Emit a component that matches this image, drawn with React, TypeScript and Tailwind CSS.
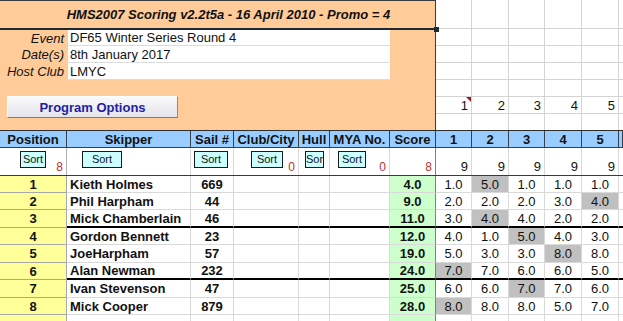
import React from 'react';

const COLS =
  'grid grid-cols-[67px_124px_43px_65px_31px_60px_46px_36px_37px_36px_37px_37px_1fr]';

type Row = { pos: number; name: string; sail: string; score: string; races: string[]; drop: number };

const ROWS: Row[] = [
  { pos: 1, name: 'Kieth Holmes', sail: '669', score: '4.0', races: ['1.0', '5.0', '1.0', '1.0', '1.0'], drop: 1 },
  { pos: 2, name: 'Phil Harpham', sail: '44', score: '9.0', races: ['2.0', '2.0', '2.0', '3.0', '4.0'], drop: 4 },
  { pos: 3, name: 'Mick Chamberlain', sail: '46', score: '11.0', races: ['3.0', '4.0', '4.0', '2.0', '2.0'], drop: 1 },
  { pos: 4, name: 'Gordon Bennett', sail: '23', score: '12.0', races: ['4.0', '1.0', '5.0', '4.0', '3.0'], drop: 2 },
  { pos: 5, name: 'JoeHarpham', sail: '57', score: '19.0', races: ['5.0', '3.0', '3.0', '8.0', '8.0'], drop: 3 },
  { pos: 6, name: 'Alan Newman', sail: '232', score: '24.0', races: ['7.0', '7.0', '6.0', '6.0', '5.0'], drop: 0 },
  { pos: 7, name: 'Ivan Stevenson', sail: '47', score: '25.0', races: ['6.0', '6.0', '7.0', '7.0', '6.0'], drop: 2 },
  { pos: 8, name: 'Mick Cooper', sail: '879', score: '28.0', races: ['8.0', '8.0', '8.0', '5.0', '7.0'], drop: 0 },
];

const HEIGHTS = ['h-[17px]', 'h-[17px]', 'h-[18px]', 'h-[17px]', 'h-[18px]', 'h-[17px]', 'h-[18px]', 'h-[17px]'];
const HEADERS = ['Position', 'Skipper', 'Sail #', 'Club/City', 'Hull', 'MYA No.', 'Score', '1', '2', '3', '4', '5', ''];
const RACE_W = ['w-[36px]', 'w-[37px]', 'w-[36px]', 'w-[37px]', 'w-[37px]'];

const SortBtn = ({ w, label = 'Sort' }: { w: string; label?: string }) => (
  <div className={`${w} h-[17px] bg-[#ccffff] border border-[#1a1a1a] flex items-center justify-center text-[11px] overflow-hidden`}>
    {label}
  </div>
);

const Count = ({ n }: { n: string }) => (
  <div className="ml-auto self-end pr-[3px] pb-[2px] text-[12px] text-[#b83232] leading-none">{n}</div>
);

export default function App() {
  const bottom = (i: number) => (i === 2 || i === 5 ? 'border-b-2 border-b-black' : 'border-b border-b-[#d9d9d9]');

  return (
    <div className="w-[623px] h-[321px] overflow-hidden bg-white text-[13px] text-[#111] leading-none font-['Liberation_Sans',Arial,sans-serif]">
      {/* top area */}
      <div className="flex h-[130px]">
        <div className="w-[436px] shrink-0 bg-[#ffcc99] border-r border-r-[#3a3a3a] flex flex-col">
          <div className="relative h-[30px] border-t border-t-[#3a3a3a] border-b-2 border-b-[#1f2933] flex items-center justify-center pl-[22px] font-bold italic">
            HMS2007 Scoring v2.2t5a - 16 April 2010 - Promo = 4
            <span className="absolute right-[-4px] bottom-[-4px] w-[5px] h-[5px] bg-[#1f2933]" />
          </div>
          {[
            ['Event', 'DF65 Winter Series Round 4', 'h-[16px]'],
            ['Date(s)', '8th January 2017', 'h-[17px]'],
            ['Host Club', 'LMYC', 'h-[17px]'],
          ].map(([label, value, h]) => (
            <div key={label} className={`flex ${h}`}>
              <div className="w-[68px] flex items-center justify-end pr-[4px] italic">{label}</div>
              <div className="w-[322px] bg-white border-b border-b-[#dcdcdc] flex items-center pl-[2px]">{value}</div>
            </div>
          ))}
          <div className="mt-[16px] ml-[7px] w-[171px] h-[22px] bg-gradient-to-b from-[#fafafc] to-[#e4e4ea] border border-t-white border-l-white border-r-[#8a8a8a] border-b-[#7a7a7a] flex items-center justify-center font-bold text-[#1f1fa0]">
            Program Options
          </div>
        </div>
        <div className="flex-1 flex flex-col">
          {['h-[29px]', 'h-[17px]', 'h-[17px]', 'h-[17px]', 'h-[17px]', 'h-[17px]', 'h-[16px]'].map((h, r) => (
            <div key={r} className={`flex ${h} ${r < 6 ? 'border-b border-b-[#d4d4d4]' : ''}`}>
              {RACE_W.map((w, c) => (
                <div key={c} className={`${w} relative border-r border-r-[#d4d4d4] flex items-center justify-end pr-[3px]`}>
                  {r === 5 ? c + 1 : ''}
                  {r === 5 && c === 0 && (
                    <span className="absolute top-0 right-0 w-0 h-0 border-l-[5px] border-l-transparent border-t-[5px] border-t-[#9b1c1c]" />
                  )}
                </div>
              ))}
              <div className="flex-1" />
            </div>
          ))}
        </div>
      </div>

      {/* table header */}
      <div className={`${COLS} h-[18px] border-t border-t-[#2e2e2e] bg-[#99ccff] font-bold`}>
        {HEADERS.map((h, i) => (
          <div key={i} className="border-r border-b border-[#34404c] flex items-center justify-center">
            {h}
          </div>
        ))}
      </div>

      {/* sort row */}
      <div className={`${COLS} h-[28px] border-b border-b-[#3a3a3a]`}>
        <div className="border-r border-r-[#b0b0b0] flex">
          <div className="pt-[3px] pl-[20px]"><SortBtn w="w-[26px]" /></div>
          <Count n="8" />
        </div>
        <div className="border-r border-r-[#d9d9d9] flex">
          <div className="pt-[3px] pl-[15px]"><SortBtn w="w-[40px]" /></div>
        </div>
        <div className="border-r border-r-[#d9d9d9] flex">
          <div className="pt-[3px] pl-[3px]"><SortBtn w="w-[34px]" /></div>
        </div>
        <div className="border-r border-r-[#d9d9d9] flex">
          <div className="pt-[3px] pl-[17px]"><SortBtn w="w-[32px]" /></div>
          <Count n="0" />
        </div>
        <div className="border-r border-r-[#d9d9d9] flex">
          <div className="pt-[3px] pl-[6px]"><SortBtn w="w-[19px]" label="Sor" /></div>
        </div>
        <div className="border-r border-r-[#d9d9d9] flex">
          <div className="pt-[3px] pl-[8px]"><SortBtn w="w-[28px]" /></div>
          <Count n="0" />
        </div>
        <div className="border-r border-r-[#808080] flex">
          <Count n="8" />
        </div>
        {[0, 1, 2, 3, 4].map((c) => (
          <div key={c} className="border-r border-r-[#d9d9d9] flex items-end justify-end pr-[3px] pb-[2px]">
            9
          </div>
        ))}
        <div />
      </div>

      {/* data rows */}
      {ROWS.map((r, i) => (
        <div key={r.pos} className={`${COLS} ${HEIGHTS[i]}`}>
          <div className="bg-[#ffff99] border-r border-b border-[#a8a8a8] flex items-center justify-center font-bold">
            {r.pos}
          </div>
          <div className={`border-r border-r-[#d9d9d9] ${bottom(i)} flex items-center pl-[3px] font-bold`}>{r.name}</div>
          <div className={`border-r border-r-[#d9d9d9] ${bottom(i)} flex items-center justify-center font-bold`}>{r.sail}</div>
          <div className={`border-r border-r-[#d9d9d9] ${bottom(i)}`} />
          <div className={`border-r border-r-[#d9d9d9] ${bottom(i)}`} />
          <div className={`border-r border-r-[#d9d9d9] ${bottom(i)}`} />
          <div className={`bg-[#ccffcc] border-r border-r-[#808080] ${bottom(i)} flex items-center justify-center font-bold`}>
            {r.score}
          </div>
          {r.races.map((v, c) => (
            <div
              key={c}
              className={`${c === r.drop ? 'bg-[#c0c0c0]' : ''} border-r border-r-[#d9d9d9] ${bottom(i)} flex items-center justify-center`}
            >
              {v}
            </div>
          ))}
          <div className={bottom(i)} />
        </div>
      ))}

      {/* trailing empty row */}
      <div className={`${COLS} h-[10px]`}>
        <div className="bg-[#ffff99] border-r border-[#a8a8a8]" />
        <div className="border-r border-r-[#d9d9d9]" />
        <div className="border-r border-r-[#d9d9d9]" />
        <div className="border-r border-r-[#d9d9d9]" />
        <div className="border-r border-r-[#d9d9d9]" />
        <div className="border-r border-r-[#d9d9d9]" />
        <div className="bg-[#ccffcc] border-r border-r-[#808080]" />
        <div className="border-r border-r-[#d9d9d9]" />
        <div className="border-r border-r-[#d9d9d9]" />
        <div className="border-r border-r-[#d9d9d9]" />
        <div className="border-r border-r-[#d9d9d9]" />
        <div className="border-r border-r-[#d9d9d9]" />
        <div />
      </div>
    </div>
  );
}
